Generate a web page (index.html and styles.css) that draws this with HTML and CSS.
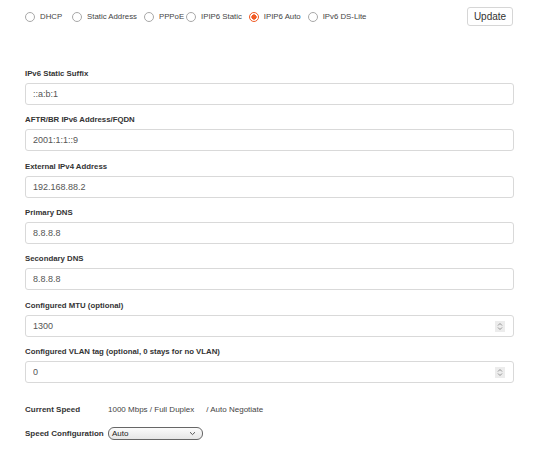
FILE: index.html
```html
<!DOCTYPE html>
<html lang="en">
<head>
    <meta charset="UTF-8">
    <meta name="viewport" content="width=device-width, initial-scale=1.0">
    <title>WAN Settings</title>
    <link rel="stylesheet" href="styles.css">
</head>
<body>

    <div class="page">
        <div class="top">
            <div class="modes">
                <label class="mode wide"><input type="radio" name="mode"> DHCP</label>
                <label class="mode"><input type="radio" name="mode"> Static Address</label>
                <label class="mode tight"><input type="radio" name="mode"> PPPoE</label>
                <label class="mode"><input type="radio" name="mode"> IPIP6 Static</label>
                <label class="mode"><input type="radio" name="mode" checked> IPIP6 Auto</label>
                <label class="mode"><input type="radio" name="mode"> IPv6 DS-Lite</label>
            </div>
            <button class="update">Update</button>
        </div>

        <div class="fields">
            <div class="field">
                <label for="suffix">IPv6 Static Suffix</label>
                <input type="text" id="suffix" value="::a:b:1">
            </div>
            <div class="field">
                <label for="aftr">AFTR/BR IPv6 Address/FQDN</label>
                <input type="text" id="aftr" value="2001:1:1::9">
            </div>
            <div class="field">
                <label for="ipv4">External IPv4 Address</label>
                <input type="text" id="ipv4" value="192.168.88.2">
            </div>
            <div class="field">
                <label for="dns1">Primary DNS</label>
                <input type="text" id="dns1" value="8.8.8.8">
            </div>
            <div class="field">
                <label for="dns2">Secondary DNS</label>
                <input type="text" id="dns2" value="8.8.8.8">
            </div>
            <div class="field">
                <label for="mtu">Configured MTU (optional)</label>
                <div class="num">
                    <input type="text" id="mtu" value="1300">
                    <span class="spin"><svg width="6" height="9" viewBox="0 0 6 9"><path d="M1 3.5 L3 1.5 L5 3.5 M1 5.5 L3 7.5 L5 5.5" fill="none" stroke="#888" stroke-width="0.9"/></svg></span>
                </div>
            </div>
            <div class="field">
                <label for="vlan">Configured VLAN tag (optional, 0 stays for no VLAN)</label>
                <div class="num">
                    <input type="text" id="vlan" value="0">
                    <span class="spin"><svg width="6" height="9" viewBox="0 0 6 9"><path d="M1 3.5 L3 1.5 L5 3.5 M1 5.5 L3 7.5 L5 5.5" fill="none" stroke="#888" stroke-width="0.9"/></svg></span>
                </div>
            </div>
        </div>

        <div class="speed">
            <div class="row">
                <span class="key">Current Speed</span>
                <span>1000 Mbps / Full Duplex</span>
                <span class="neg">/ Auto Negotiate</span>
            </div>
            <div class="row">
                <span class="key">Speed Configuration</span>
                <div class="select">
                    <span>Auto</span>
                    <svg width="7" height="5" viewBox="0 0 7 5"><path d="M1 1.2 L3.5 3.6 L6 1.2" fill="none" stroke="#555" stroke-width="1"/></svg>
                </div>
            </div>
        </div>
    </div>

</body>
</html>
```

FILE: styles.css
```css
/* Estilos gerais */
body {
    font-family: "Liberation Sans", Arial, sans-serif;
    margin: 0;
    padding: 0;
    background-color: #ffffff;
    color: #333;
}

.page {
    width: 489px;
    padding: 0 25px;
}

/* Linha dos modos */
.top {
    display: flex;
    align-items: center;
    justify-content: space-between;
    height: 33px;
}

.modes {
    display: flex;
    align-items: center;
    font-size: 7.8px;
    color: #444;
}

.mode {
    display: flex;
    align-items: center;
    margin-right: 7px;
}

.mode.wide {
    margin-right: 10px;
}

.mode.tight {
    margin-right: 2px;
}

.mode input {
    appearance: none;
    width: 10px;
    height: 10px;
    margin: 0 5px 0 0;
    border: 1px solid #a8a8a8;
    border-radius: 50%;
    box-sizing: border-box;
    background: #fff;
}

.mode input:checked {
    border-color: #f15a24;
    background: radial-gradient(circle, #f15a24 0 2.4px, #fff 2.9px);
}

.update {
    font-family: "Liberation Sans", Arial, sans-serif;
    font-size: 10px;
    color: #333;
    background: #fff;
    border: 1px solid #d6d6d6;
    border-radius: 3px;
    width: 46px;
    height: 19px;
    padding: 0;
    margin-right: 1px;
}

/* Campos */
.fields {
    margin-top: 36px;
    display: flex;
    flex-direction: column;
    gap: 10.33px;
}

.field label {
    display: block;
    font-size: 7.8px;
    font-weight: bold;
    line-height: 10px;
    margin-bottom: 4px;
    color: #333;
}

.field input {
    display: block;
    width: 100%;
    height: 22px;
    box-sizing: border-box;
    border: 1px solid #d9d9d9;
    border-radius: 3px;
    padding: 0 7px;
    font-family: "Liberation Sans", Arial, sans-serif;
    font-size: 9px;
    color: #555;
    outline: none;
}

.num {
    position: relative;
}

.spin {
    position: absolute;
    right: 9px;
    top: 6px;
    width: 10px;
    height: 11px;
    background: #ececec;
    display: flex;
    align-items: center;
    justify-content: center;
}

/* Velocidade */
.speed {
    margin-top: 19px;
    font-size: 8px;
    color: #444;
}

.row {
    display: flex;
    align-items: center;
    height: 16px;
    margin-bottom: 8px;
}

.key {
    width: 83px;
    font-weight: bold;
    color: #333;
}

.neg {
    margin-left: 12px;
}

.select {
    width: 95px;
    height: 13px;
    box-sizing: border-box;
    border: 1px solid #666;
    border-radius: 6px;
    background: linear-gradient(#fbfbfb, #e6e6e6);
    display: flex;
    align-items: center;
    justify-content: space-between;
    padding: 0 6px 0 3px;
    color: #222;
}
```
